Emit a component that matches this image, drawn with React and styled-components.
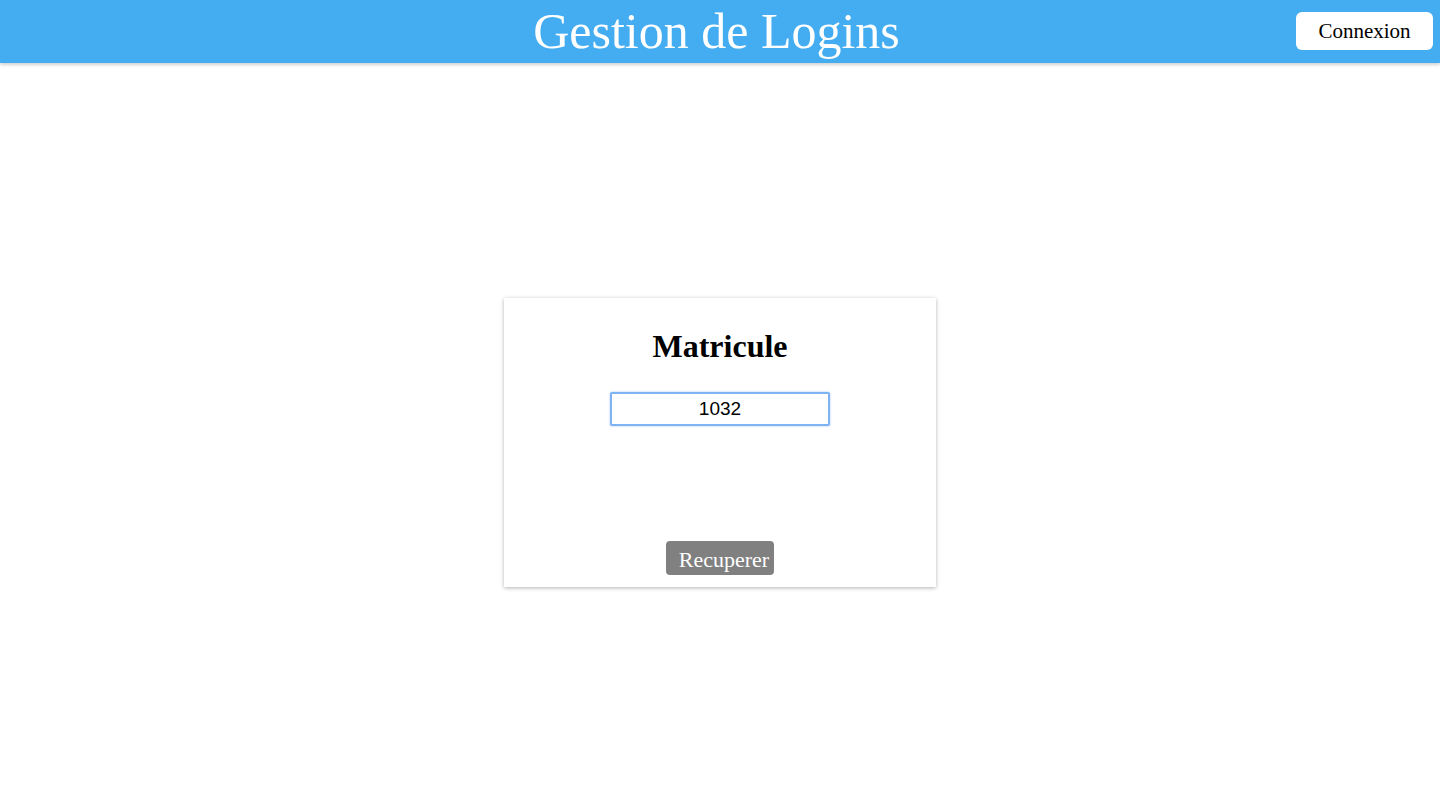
import styled, { createGlobalStyle } from "styled-components";

const GlobalStyle = createGlobalStyle`
  html, body {
    margin: 0;
    padding: 0;
    background: #fff;
    font-family: "Liberation Serif", "Times New Roman", serif;
  }
`;

const Page = styled.div`
  min-height: 799px;
  display: flex;
  flex-direction: column;
`;

const Header = styled.header`
  height: 63px;
  background: #44acf0;
  box-shadow: 0 2px 3px rgba(0, 0, 0, 0.18);
  display: grid;
  grid-template-columns: 1fr auto 1fr;
  align-items: center;
  padding: 0 7px 0 0;
`;

const Title = styled.h1`
  grid-column: 2;
  margin: 0;
  color: #fff;
  font-weight: normal;
  font-size: 50px;
  line-height: 63px;
`;

const LoginButton = styled.button`
  grid-column: 3;
  justify-self: end;
  width: 137px;
  height: 38px;
  margin-top: -1px;
  border: none;
  border-radius: 6px;
  background: #fff;
  color: #000;
  font-family: "Liberation Serif", "Times New Roman", serif;
  font-size: 21px;
  cursor: pointer;
`;

const Main = styled.main`
  flex: 1;
  display: flex;
  justify-content: center;
  align-items: flex-start;
  padding-top: 235px;
`;

const Card = styled.section`
  width: 432px;
  height: 289px;
  box-sizing: border-box;
  background: #fff;
  box-shadow: 0 1px 4px rgba(0, 0, 0, 0.3);
  display: flex;
  flex-direction: column;
  align-items: center;
  padding: 28px 0 12px;
`;

const Heading = styled.h2`
  margin: 0;
  font-size: 32px;
  font-weight: bold;
  line-height: 40px;
`;

const Field = styled.input`
  margin-top: 26px;
  width: 220px;
  height: 34px;
  box-sizing: border-box;
  border: 2px solid #7fb4f4;
  border-radius: 2px;
  box-shadow: 0 0 2px rgba(80, 150, 240, 0.6);
  outline: none;
  text-align: center;
  font-family: "Liberation Sans", Arial, sans-serif;
  font-size: 19px;
  color: #000;
`;

const Submit = styled.button`
  margin-top: auto;
  width: 108px;
  height: 34px;
  border: none;
  border-radius: 4px;
  background: #808080;
  color: #fff;
  font-family: "Liberation Serif", "Times New Roman", serif;
  font-size: 22px;
  padding: 4px 0 0 8px;
  cursor: pointer;
`;

export default function App() {
  return (
    <>
      <GlobalStyle />
      <Page>
        <Header>
          <Title>Gestion de Logins</Title>
          <LoginButton>Connexion</LoginButton>
        </Header>
        <Main>
          <Card>
            <Heading>Matricule</Heading>
            <Field defaultValue="1032" />
            <Submit>Recuperer</Submit>
          </Card>
        </Main>
      </Page>
    </>
  );
}
